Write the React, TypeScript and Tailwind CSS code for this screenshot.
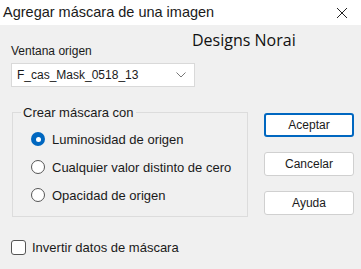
const radios = [
  { label: 'Luminosidad de origen', checked: true },
  { label: 'Cualquier valor distinto de cero', checked: false },
  { label: 'Opacidad de origen', checked: false },
];

const Radio = ({ checked }: { checked: boolean }) =>
  checked ? (
    <span className="flex h-[14px] w-[14px] shrink-0 items-center justify-center rounded-full bg-[#0067c0]">
      <span className="h-[5px] w-[5px] rounded-full bg-white" />
    </span>
  ) : (
    <span className="h-[14px] w-[14px] shrink-0 rounded-full border border-[#555] bg-white" />
  );

const Button = ({ label, focused }: { label: string; focused?: boolean }) => (
  <button
    type="button"
    className={
      focused
        ? 'h-[24px] w-[90px] rounded-[3px] border-2 border-[#0067c0] bg-white text-[12px] text-[#1a1a1a]'
        : 'h-[24px] w-[90px] rounded-[3px] border border-[#d0d0d0] bg-white text-[12px] text-[#1a1a1a]'
    }
  >
    {label}
  </button>
);

export default function App() {
  return (
    <div className="flex h-[269px] w-[361px] flex-col bg-[#f0f0f0] font-['Liberation_Sans',sans-serif] text-[12px] text-[#1a1a1a]">
      <div className="flex h-[25px] items-center justify-between bg-white pl-[3px] pr-[13px]">
        <span className="text-[14.5px]">Agregar máscara de una imagen</span>
        <svg width="12" height="12" viewBox="0 0 12 12" className="stroke-[#222]">
          <path d="M1 1 L11 11 M11 1 L1 11" strokeWidth="1" />
        </svg>
      </div>
      <div className="flex pl-[11px] pt-[4px]">
        <div className="flex w-[237px] flex-col">
          <div className="relative h-[34px]">
            <span className="absolute left-0 top-[13px]">Ventana origen</span>
          </div>
          <div className="flex h-[24px] w-[184px] items-center justify-between border border-[#d9d9d9] bg-white pl-[5px] pr-[8px]">
            <span>F_cas_Mask_0518_13</span>
            <svg width="10" height="6" viewBox="0 0 10 6" className="fill-none stroke-[#777]">
              <path d="M0.5 0.5 L5 5 L9.5 0.5" />
            </svg>
          </div>
          <fieldset className="mt-[16px] ml-[1px] h-[114px] w-[236px] border border-[#dcdcdc] pl-[8px] pt-[7px]">
            <legend className="px-[2px] text-[13px]">Crear máscara con</legend>
            <div className="ml-[10px] flex flex-col gap-[8.5px]">
              {radios.map((r) => (
                <label key={r.label} className="flex items-center gap-[7px] text-[13px]">
                  <Radio checked={r.checked} />
                  {r.label}
                </label>
              ))}
            </div>
          </fieldset>
          <label className="mt-[21px] flex items-center gap-[6px] text-[13px]">
            <span className="h-[15px] w-[15px] rounded-[3px] border border-[#555] bg-white" />
            Invertir datos de máscara
          </label>
        </div>
        <div className="flex flex-col">
          <span className="ml-[-56px] mt-[1px] h-[20px] font-['Open_Sans',sans-serif] text-[16px] leading-[20px] text-[#111]">
            Designs Norai
          </span>
          <div className="ml-[16px] mt-[63px] flex flex-col gap-[15px]">
            <Button label="Aceptar" focused />
            <Button label="Cancelar" />
            <Button label="Ayuda" />
          </div>
        </div>
      </div>
    </div>
  );
}
